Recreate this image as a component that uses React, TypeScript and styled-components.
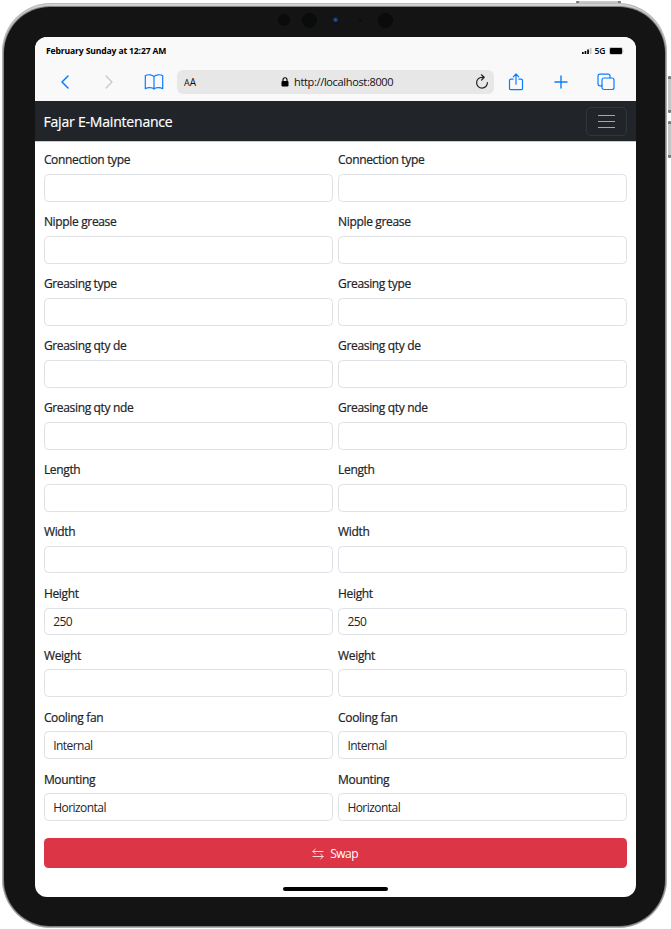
import React from 'react';
import styled, { createGlobalStyle } from 'styled-components';

const Global = createGlobalStyle`
  * { box-sizing: border-box; }
  body { margin: 0; background: #fff; overflow: hidden; }
`;

const Stage = styled.div`
  position: relative;
  width: 671px;
  height: 929px;
  padding: 3px 4px 1px 2px;
  font-family: 'Open Sans', 'Noto Sans', sans-serif;
  color: #212529;
`;

const SideKey = styled.div<{ $x: number; $y: number; $w: number; $h: number }>`
  position: absolute;
  left: ${p => p.$x}px;
  top: ${p => p.$y}px;
  width: ${p => p.$w}px;
  height: ${p => p.$h}px;
  border-radius: 1px;
  background: #c6c7c9;
  border: 0 solid #77797b;
  border-width: ${p => (p.$w > p.$h ? '0 3px' : '3px 0')};
`;

const Shell = styled.div`
  position: relative;
  height: 925px;
  padding: 4px 2px 2px;
  border-radius: 49px;
  background: linear-gradient(#d4d6d8, #c9cbcd 50%, #bcbec0);
  box-shadow: inset 0 0 1px 1px #b4b6b8;
`;

const Bezel = styled.div`
  position: relative;
  height: 919px;
  padding: 30px 29px;
  border-radius: 46px;
  background: #141414;
  box-shadow: 0 0 1px 1px #77797b;
`;

const Lens = styled.div<{ $x: number; $size: number; $blue?: boolean }>`
  position: absolute;
  left: ${p => p.$x - 4 - p.$size / 2}px;
  top: ${p => 13 - p.$size / 2}px;
  width: ${p => p.$size}px;
  height: ${p => p.$size}px;
  border-radius: 50%;
  background: ${p => (p.$blue ? 'radial-gradient(circle at 50% 40%, #2a6cae, #12305c 35%, #0b0f18 65%)' : '#0a0c0c')};
`;

const Screen = styled.div`
  width: 600.5px;
  height: 859.5px;
  margin-left: 2px;
  overflow: hidden;
  border-radius: 12px;
  background: #fff;
  display: flex;
  flex-direction: column;
`;

const StatusBar = styled.div`
  height: 27px;
  padding: 1px 12px 0 11px;
  display: flex;
  align-items: center;
  justify-content: space-between;
  background: #f9f9f9;
  color: #000;
`;

const Text = styled.span<{ $size: number; $w: number; $weight?: number; $color?: string }>`
  width: ${p => p.$w}px;
  font-size: ${p => p.$size}px;
  font-weight: ${p => p.$weight ?? 400};
  color: ${p => p.$color ?? 'inherit'};
  line-height: 1.4;
  white-space: nowrap;
`;

const StatusDate = styled(Text)`
  letter-spacing: -0.15px;
`;

const Signals = styled.div`
  display: flex;
  align-items: center;
  gap: 3px;
`;

const Browser = styled.div`
  height: 37px;
  flex: none;
  background: #f9f9f9;
  display: grid;
  grid-template-columns: 60px 28px 54px 316.5px 45px 44px 46px;
  align-items: center;
  justify-items: center;
  padding-bottom: 2px;
`;

const BookIcon = styled.svg`
  margin-left: 8px;
`;

const Address = styled.div`
  width: 316.5px;
  height: 24px;
  margin-top: 1px;
  border-radius: 6px;
  background: #e7e7e7;
  color: #111;
  display: grid;
  grid-template-columns: 97px 1fr 19px;
  align-items: center;
  padding-left: 7px;
`;

const ReaderMark = styled.div`
  font-size: 10px;
  line-height: 14px;
  small { font-size: 9px; }
`;

const Url = styled.div`
  display: flex;
  align-items: center;
  gap: 5px;
`;

const UrlText = styled(Text)`
  letter-spacing: -0.34px;
`;

const Navbar = styled.div`
  height: 40px;
  flex: none;
  padding: 0 8.5px;
  background: #212529;
  box-shadow: 0 1px #c9cacc;
  display: flex;
  align-items: center;
  justify-content: space-between;
`;

const Brand = styled(Text)`
  letter-spacing: -0.2px;
  padding-top: 2px;
  -webkit-text-stroke: 0.2px currentColor;
`;

const Toggler = styled.div`
  width: 41px;
  height: 29px;
  border: 1px solid #32363a;
  border-radius: 5px;
  display: flex;
  flex-direction: column;
  align-items: center;
  justify-content: center;
  gap: 5px;
`;

const TogglerLine = styled.div`
  width: 17px;
  height: 1px;
  background: #a5a7a9;
`;

const Form = styled.div`
  padding: 9.1px 8.5px 0;
  display: grid;
  grid-template-columns: 289px 289px;
  column-gap: 5.2px;
  grid-auto-rows: 61.93px;
`;

const Field = styled.label`
  display: block;
`;

const FieldLabel = styled.span`
  display: block;
  height: 24px;
  padding: 0.3px 0 0 0.4px;
  font-size: 12px;
  line-height: 20px;
  letter-spacing: -0.34px;
  -webkit-text-stroke: 0.22px currentColor;
`;

const Input = styled.input`
  display: block;
  width: 289px;
  height: 27.8px;
  padding: 0 8.7px;
  border: 1px solid #dee2e6;
  border-radius: 4.5px;
  background: #fff;
  color: #212529;
  font: 400 12px 'Open Sans', 'Noto Sans', sans-serif;
  letter-spacing: -0.54px;
  outline: 0;
`;

const SwapButton = styled.button`
  width: 583.3px;
  height: 30px;
  flex: none;
  margin: 6.6px 8.5px 0;
  padding: 2px 0 0;
  border: 0;
  border-radius: 4.5px;
  background: #dc3545;
  color: #fff;
  font: 400 12px 'Open Sans', 'Noto Sans', sans-serif;
  letter-spacing: -0.5px;
  display: flex;
  align-items: center;
  justify-content: center;
  gap: 6px;
`;

const HomeBar = styled.div`
  width: 105px;
  height: 4px;
  margin: 19px auto 0;
  border-radius: 2px;
  background: #000;
`;

const fields: [string, string][] = [
  ['Connection type', ''],
  ['Nipple grease', ''],
  ['Greasing type', ''],
  ['Greasing qty de', ''],
  ['Greasing qty nde', ''],
  ['Length', ''],
  ['Width', ''],
  ['Height', '250'],
  ['Weight', ''],
  ['Cooling fan', 'Internal'],
  ['Mounting', 'Horizontal'],
];

const blue = { fill: 'none', stroke: '#0a7cff', strokeWidth: 1.2, strokeLinecap: 'round', strokeLinejoin: 'round' } as const;

export default function App() {
  return (
    <>
      <Global />
      <Stage>
        <SideKey $x={576} $y={1} $w={45} $h={3} />
        <SideKey $x={668} $y={76} $w={3} $h={37} />
        <SideKey $x={668} $y={121} $w={3} $h={37} />
        <Shell>
          <Bezel>
            <Lens $x={284} $size={12} />
            <Lens $x={309.5} $size={15} />
            <Lens $x={335} $size={7} $blue />
            <Lens $x={360} $size={3} />
            <Lens $x={385.5} $size={15} />
            <Screen>
              <StatusBar>
                <StatusDate $size={8.6} $w={130} $weight={700}>February Sunday at 12:27 AM</StatusDate>
                <Signals>
                  <svg width="10" height="6" viewBox="0 0 10 6">
                    <path d="M0 4h1.7v2H0zM2.6 3h1.7v3H2.6zM5.2 1.5h1.7V6H5.2z" fill="#000" />
                    <path d="M7.8 0h1.7v6H7.8z" fill="#c4c4c4" />
                  </svg>
                  <Text $size={8.5} $w={11} $weight={600}>5G</Text>
                  <svg width="15" height="8" viewBox="0 0 15 8">
                    <rect x=".4" y=".4" width="13" height="7" rx="1.6" fill="#fff" stroke="#999" strokeWidth=".6" />
                    <rect x="1" y="1" width="12" height="6" rx="1" />
                    <path d="M14 2.8q1 1.2 0 2.4z" fill="#999" />
                  </svg>
                </Signals>
              </StatusBar>
              <Browser>
                <svg width="10" height="14" viewBox="0 0 10 14"><path d="M8 1 2 7l6 6" {...blue} strokeWidth={1.5} /></svg>
                <svg width="10" height="14" viewBox="0 0 10 14"><path d="m2 1 6 6-6 6" {...blue} stroke="#c6c6c8" /></svg>
                <BookIcon width="20" height="16" viewBox="0 0 20 16">
                  <path d="M10 2.6C8.7.6 3.7.1 1.3 1.8v12.900c2.500-1.500 7.200-1.300 8.700.3 1.500-1.600 6.200-1.800 8.700-.3V1.800C16.300.1 11.300.6 10 2.600V15" {...blue} />
                </BookIcon>
                <Address>
                  <ReaderMark><small>A</small>A</ReaderMark>
                  <Url>
                    <svg width="8" height="10" viewBox="0 0 8 10">
                      <rect x=".5" y="4" width="7" height="5.5" rx="1" />
                      <path d="M2 4.5V2.8a2 2 0 0 1 4 0v1.7" fill="none" stroke="#000" strokeWidth="1.1" />
                    </svg>
                    <UrlText $size={11} $w={102}>http://localhost:8000</UrlText>
                  </Url>
                  <svg width="14" height="16" viewBox="0 0 14 16" fill="none" stroke="#222" strokeWidth="1.2" strokeLinecap="round" strokeLinejoin="round">
                    <path d="M12.4 8.6A5.4 5.4 0 1 1 7 3.3h2M6.4.8 9.2 3.3 6.6 6" />
                  </svg>
                </Address>
                <svg width="16" height="18" viewBox="0 0 16 18">
                  <path d="M5 6.2H2.8q-1.3 0-1.3 1.3v7.9q0 1.3 1.3 1.3h10.4q1.3 0 1.3-1.3V7.5q0-1.3-1.3-1.3H11M8 11.2V1.2M5.3 3.8 8 1l2.7 2.8" {...blue} />
                </svg>
                <svg width="14" height="14" viewBox="0 0 14 14"><path d="M7 1v12M1 7h12" {...blue} strokeWidth={1.4} /></svg>
                <svg width="18" height="18" viewBox="0 0 18 18">
                  <rect x="5" y="5" width="12" height="11.5" rx="2" {...blue} />
                  <path d="M5 12.8H3q-2 0-2-2V3.2q0-2 2-2h8q2 0 2 2V5" {...blue} />
                </svg>
              </Browser>
              <Navbar>
                <Brand $size={14} $w={150} $color="#fff">Fajar E-Maintenance</Brand>
                <Toggler><TogglerLine /><TogglerLine /><TogglerLine /></Toggler>
              </Navbar>
              <Form>
                {fields.flatMap(([name, value]) =>
                  ['left', 'right'].map(side => (
                    <Field key={name + side}>
                      <FieldLabel>{name}</FieldLabel>
                      <Input defaultValue={value} />
                    </Field>
                  )),
                )}
              </Form>
              <SwapButton>
                <svg width="12" height="12" viewBox="0 0 12 12" fill="none" stroke="#fff" strokeWidth=".8" strokeLinecap="round" strokeLinejoin="round">
                  <path d="M11 3.5H1M3.3 1 1 3.5 3.3 6M1 8.5h10M8.7 6 11 8.5 8.7 11" />
                </svg>
                Swap
              </SwapButton>
              <HomeBar />
            </Screen>
          </Bezel>
        </Shell>
      </Stage>
    </>
  );
}
